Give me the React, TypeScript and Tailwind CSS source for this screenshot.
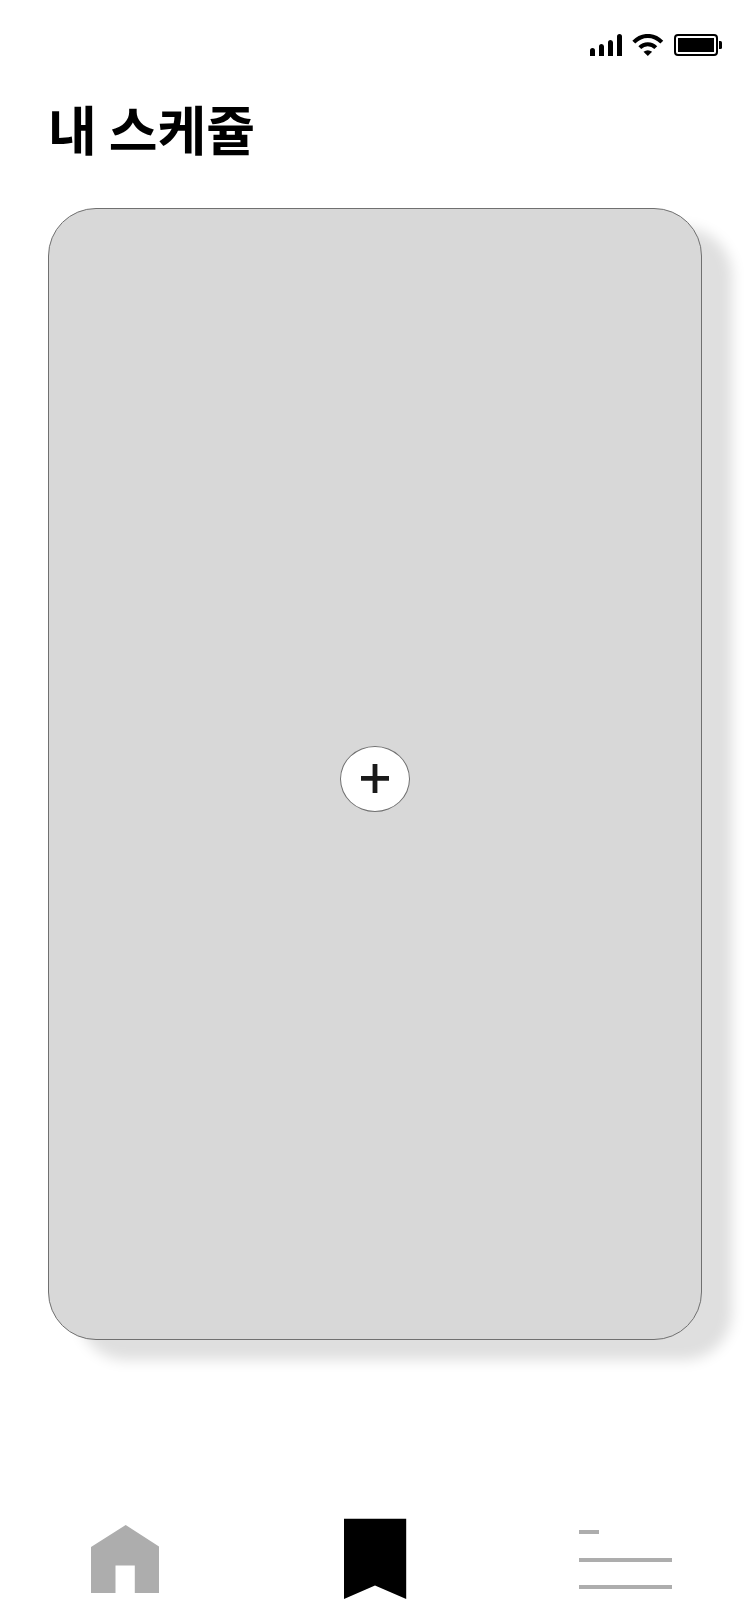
function StatusBar() {
  return (
    <header className="mr-7 mt-[34px] flex h-[22px] items-end gap-[10px] self-end">
      <svg width="33" height="22" viewBox="0 0 33 22" aria-label="Signal">
        <path d="M0 22v-5.5a2.5 2.5 0 0 1 5 0V22zM9 22v-9.5a2.5 2.5 0 0 1 5 0V22zM18 22V8.500a2.500 2.500 0 0 1 5 0V22zM27 22V2.500a2.500 2.500 0 0 1 5 0V22z" />
      </svg>
      <svg className="-ml-px" width="32" height="22" viewBox="-.3 0 32 22" aria-label="Wi-Fi">
        <path d="M1.500 8.200C9.500 -0.200 21.500 -0.200 29.500 8.200M7.500 13.700C12 9 19 9 23.500 13.700" fill="none" stroke="black" strokeWidth="4" />
        <path d="M11.200 17.800Q15.500 14.600 19.800 17.800L15.500 22z" />
      </svg>
      <svg width="48" height="22" viewBox="0 0 48 22" aria-label="Battery">
        <rect x="1" y="1" width="42" height="20" rx="3" fill="none" stroke="black" strokeWidth="2" />
        <rect x="4" y="4" width="36" height="14" />
        <path d="M45 7h1.500a1.500 1.500 0 0 1 1.500 1.500v5a1.500 1.500 0 0 1-1.500 1.500H45z" />
      </svg>
    </header>
  );
}

function TabBar() {
  return (
    <nav className="mb-[25px] mt-auto flex h-[81px] items-start justify-between pl-[91px] pr-[78px]">
      <button aria-label="Home" className="mt-[7px]">
        <svg className="block" width="68" height="68" viewBox="0 0 68 68" fill="#adadad">
          <path d="M0 22L34.700 0L68 21.500V68H43.800V40.500H24.500V68H0z" />
        </svg>
      </button>
      <button aria-label="Schedule" className="ml-[13px]">
        <svg className="block" width="63" height="81" viewBox="0 0 63 81">
          <path d="M0 .7H62.200V81L31 67.500L0 81z" />
        </svg>
      </button>
      <button aria-label="Menu" className="mt-3 flex w-[93px] flex-col">
        <span className="h-1 w-5 bg-[#adadad]" />
        <span className="mt-6 h-1 w-full bg-[#adadad]" />
        <span className="mt-[23px] h-1 w-full bg-[#adadad]" />
      </button>
    </nav>
  );
}

export default function App() {
  return (
    <div className="flex h-[1624px] w-[750px] flex-col overflow-hidden bg-white text-black">
      <StatusBar />
      <h1 className="ml-[48px] mt-[34px] h-[76px] whitespace-nowrap font-['Noto_Sans_CJK_KR',sans-serif] text-[53px] font-bold leading-[76px]">
        내 스케쥴
      </h1>
      <main className="mx-12 mt-[42px] flex h-[1132px] w-[654px] items-center justify-center rounded-[48px] border border-[#707070] bg-[#d8d8d8] pt-[10px] shadow-[30px_20px_14px_#dfdfdf]">
        <button aria-label="Add schedule" className="flex h-[66px] w-[70px] items-center justify-center rounded-[50%] border border-[#707070] bg-white">
          <svg className="mb-px" width="28" height="29" viewBox="0 0 28 29" fill="#1a1a1a">
            <path d="M11.600 0h4.800v12.100H28v4.600H16.400V29h-4.800V16.700H0v-4.600h11.600z" />
          </svg>
        </button>
      </main>
      <TabBar />
    </div>
  );
}
